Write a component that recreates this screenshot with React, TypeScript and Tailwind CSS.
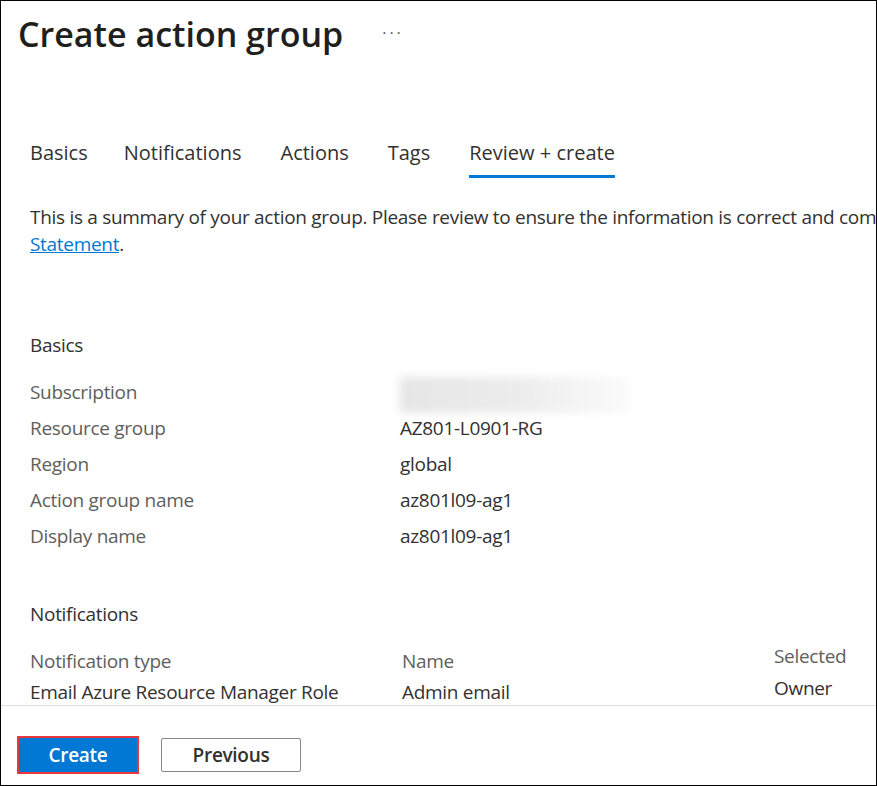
import React from "react";

const font = { fontFamily: '"Open Sans", "Noto Sans", "Liberation Sans", sans-serif' };

const basics: [string, string | null][] = [
  ["Subscription", null],
  ["Resource group", "AZ801-L0901-RG"],
  ["Region", "global"],
  ["Action group name", "az801l09-ag1"],
  ["Display name", "az801l09-ag1"],
];

const tabs = ["Basics", "Notifications", "Actions", "Tags", "Review + create"];

export default function App() {
  return (
    <div
      className="w-[877px] h-[786px] border border-black bg-white overflow-hidden flex flex-col text-[#323130]"
      style={font}
    >
      <div className="h-[704px] overflow-hidden flex flex-col">
        {/* Header */}
        <div className="h-[66px] pl-[17px] flex items-center gap-[39px]">
          <h1 className="text-[34px] leading-[36px] font-semibold text-[#201f1e]">
            Create action group
          </h1>
          <span className="text-[16px] text-[#605e5c] tracking-[3px] -mt-[2px]">···</span>
        </div>

        {/* Tabs */}
        <div className="mt-[76px] pl-[29px] flex gap-[39px]">
          {tabs.map((t, i) => (
            <div key={t} className={`flex flex-col ${i === 0 ? "-mr-[3px]" : ""}`}>
              <span className="text-[20px] leading-[20px] text-[#323130] whitespace-nowrap">{t}</span>
              <div className={`mt-[12px] h-[3px] ${i === 4 ? "bg-[#0078d4]" : "bg-transparent"}`} />
            </div>
          ))}
        </div>

        {/* Description */}
        <div className="mt-[26px] pl-[29px] text-[19px] leading-[27px] whitespace-nowrap tracking-[-0.3px] text-[#323130]">
          <div>This is a summary of your action group. Please review to ensure the information is correct and complete.</div>
          <div>
            <span className="text-[#0078d4] underline">Statement</span>.
          </div>
        </div>

        {/* Basics section */}
        <div className="mt-[77px] pl-[29px] text-[19px] leading-[20px] tracking-[-0.3px] text-[#323130]">Basics</div>
        <div className="mt-[19px] pl-[29px] flex flex-col">
          {basics.map(([k, v]) => (
            <div key={k} className="h-[36px] flex items-center text-[19px] tracking-[-0.3px]">
              <div className="w-[370px] text-[#605e5c]">{k}</div>
              {v ? (
                <div className="text-[#323130]">{v}</div>
              ) : (
                <div className="h-[36px] w-[230px] bg-gradient-to-r from-[#e6e6e6] via-[#ececec] to-[#fbfbfb] blur-[4px] mt-[6px]" />
              )}
            </div>
          ))}
        </div>

        {/* Notifications section */}
        <div className="mt-[50px] pl-[29px] text-[19px] leading-[20px] tracking-[-0.3px] text-[#323130]">Notifications</div>
        <div className="mt-[27px] pl-[29px] flex text-[19px] leading-[20px] tracking-[-0.3px]">
          <div className="w-[372px] flex flex-col gap-[11px]">
            <span className="text-[#605e5c]">Notification type</span>
            <span className="text-[#323130] whitespace-nowrap">Email Azure Resource Manager Role</span>
          </div>
          <div className="w-[372px] flex flex-col gap-[11px]">
            <span className="text-[#605e5c]">Name</span>
            <span className="text-[#323130]">Admin email</span>
          </div>
          <div className="flex flex-col gap-[12px] -mt-[5px]">
            <span className="text-[#605e5c]">Selected</span>
            <span className="text-[#323130]">Owner</span>
          </div>
        </div>
      </div>

      {/* Footer */}
      <div className="flex-1 border-t border-[#e1dfdd] pl-[16px] pt-[30px] flex items-start gap-[22px]">
        <button className="w-[122px] h-[38px] border-2 border-[#e8383d] bg-[#0078d4] text-white text-[19px] font-semibold tracking-[-0.3px] flex items-center justify-center">
          Create
        </button>
        <button className="w-[140px] h-[34px] mt-[2px] border border-[#8a8886] rounded-[2px] bg-white text-[#323130] text-[19px] font-semibold tracking-[-0.3px] flex items-center justify-center">
          Previous
        </button>
      </div>
    </div>
  );
}
